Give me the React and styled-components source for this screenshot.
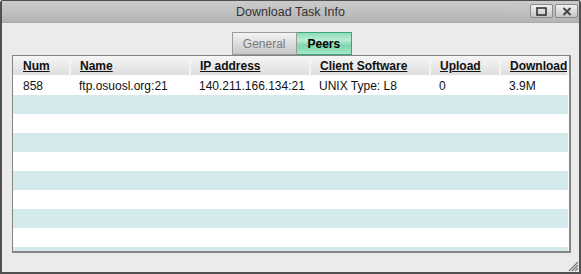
import React from 'react'
import styled, { createGlobalStyle } from 'styled-components'

const GlobalStyle = createGlobalStyle`
  html, body {
    margin: 0;
    padding: 0;
    background: #ebebeb;
  }
  body {
    font-family: "Liberation Sans", Arial, sans-serif;
    font-size: 12px;
  }
`

const Window = styled.div`
  width: 581px;
  height: 274px;
  box-sizing: border-box;
  border: 2px solid #505050;
  border-top-width: 1px;
  border-radius: 3px 3px 0 0;
  background: #ebebeb;
  display: flex;
  flex-direction: column;
  position: relative;
`

const TitleBar = styled.div`
  height: 21px;
  flex-shrink: 0;
  background: linear-gradient(#cbcbcb, #b4b4b4);
  border-bottom: 1px solid #a8a8a8;
  display: flex;
  align-items: center;
  justify-content: center;
  position: relative;
  color: #333;
  font-size: 12.5px;
`

const TitleButtons = styled.div`
  position: absolute;
  right: 1px;
  top: 3px;
  display: flex;
  gap: 2px;
`

const TitleButton = styled.div`
  width: 23px;
  height: 14px;
  box-sizing: border-box;
  border: 1px solid #8a8a8a;
  border-radius: 2px;
  background: linear-gradient(#f2f2f2, #c4c4c4);
  display: flex;
  align-items: center;
  justify-content: center;
`

const Body = styled.div`
  flex: 1;
  display: flex;
  flex-direction: column;
  padding: 9px 8px 0 10px;
`

const Tabs = styled.div`
  display: flex;
  justify-content: center;
  padding-left: 1px;
`

const Tab = styled.div`
  height: 23px;
  box-sizing: border-box;
  padding: 0 ${p => (p.active ? 11 : 10)}px;
  display: flex;
  align-items: center;
  font-size: 12px;
  border: 1px solid ${p => (p.active ? '#3aa57e' : '#9a9a9a')};
  ${p => (p.active ? 'border-left: none;' : '')}
  color: ${p => (p.active ? '#000' : '#7a7a7a')};
  font-weight: ${p => (p.active ? 'bold' : 'normal')};
  background: ${p =>
    p.active
      ? 'linear-gradient(#8fdcb9 0%, #b8ecd3 35%, #7fd5ae 60%, #a6e7c9 100%)'
      : 'linear-gradient(#f4f4f4 0%, #dedede 45%, #c9c9c9 100%)'};
`

const TableBox = styled.div`
  height: 198px;
  box-sizing: border-box;
  border: 1px solid #858585;
  border-right-width: 2px;
  border-bottom-width: 2px;
  background: #fff;
  overflow: hidden;
`

const Grid = styled.table`
  border-collapse: collapse;
  table-layout: fixed;
  width: 100%;
`

const HeadCell = styled.th`
  height: 19px;
  padding: 0 0 0 ${p => p.pad || 9}px;
  text-align: left;
  font-weight: bold;
  text-decoration: underline;
  color: #111;
  background: linear-gradient(#f6f6f6, #dedede);
  border-right: 2px solid #f4f4f4;
  border-bottom: 1px solid #fff;
  white-space: nowrap;
  overflow: hidden;
`

const Row = styled.tr`
  background: ${p => (p.odd ? '#d5eaec' : '#fff')};
`

const Cell = styled.td`
  height: 19px;
  padding: 0 0 0 ${p => p.pad || 9}px;
  color: #111;
  white-space: nowrap;
  overflow: hidden;
`

const Grip = styled.svg`
  position: absolute;
  right: 0;
  bottom: 0;
`

const columns = [
  { name: 'Num', width: 57, pad: 10 },
  { name: 'Name', width: 120 },
  { name: 'IP address', width: 120 },
  { name: 'Client Software', width: 120 },
  { name: 'Upload', width: 70 },
  { name: 'Download' },
]

const peers = [['858', 'ftp.osuosl.org:21', '140.211.166.134:21', 'UNIX Type: L8', '0', '3.9M']]

const App = () => {
  const rows = []
  for (let i = 0; i < 10; i++) {
    const data = peers[i] || ['', '', '', '', '', '']
    rows.push(
      <Row key={i} odd={i % 2 === 1}>
        {data.map((v, j) => (
          <Cell key={j} pad={columns[j].pad}>{v}</Cell>
        ))}
      </Row>
    )
  }

  return (
    <>
      <GlobalStyle />
      <Window>
        <TitleBar>
          Download Task Info
          <TitleButtons>
            <TitleButton>
              <svg width="11" height="9" viewBox="0 0 11 9">
                <rect x="1" y="1" width="9" height="7" fill="none" stroke="#333" strokeWidth="1.6" />
              </svg>
            </TitleButton>
            <TitleButton>
              <svg width="10" height="9" viewBox="0 0 10 9">
                <path d="M1.5 1 L8.5 8 M8.5 1 L1.5 8" stroke="#444" strokeWidth="2" />
              </svg>
            </TitleButton>
          </TitleButtons>
        </TitleBar>
        <Body>
          <Tabs>
            <Tab>General</Tab>
            <Tab active>Peers</Tab>
          </Tabs>
          <TableBox>
            <Grid>
              <colgroup>
                {columns.map(c => (
                  <col key={c.name} style={c.width ? { width: c.width } : undefined} />
                ))}
              </colgroup>
              <thead>
                <tr>
                  {columns.map(c => (
                    <HeadCell key={c.name} pad={c.pad}>{c.name}</HeadCell>
                  ))}
                </tr>
              </thead>
              <tbody>{rows}</tbody>
            </Grid>
          </TableBox>
        </Body>
        <Grip width="12" height="12" viewBox="0 0 12 12">
          <path d="M11 2 L2 11 M11 5 L5 11 M11 8 L8 11" stroke="#777" strokeWidth="1.2" />
        </Grip>
      </Window>
    </>
  )
}

export default App
